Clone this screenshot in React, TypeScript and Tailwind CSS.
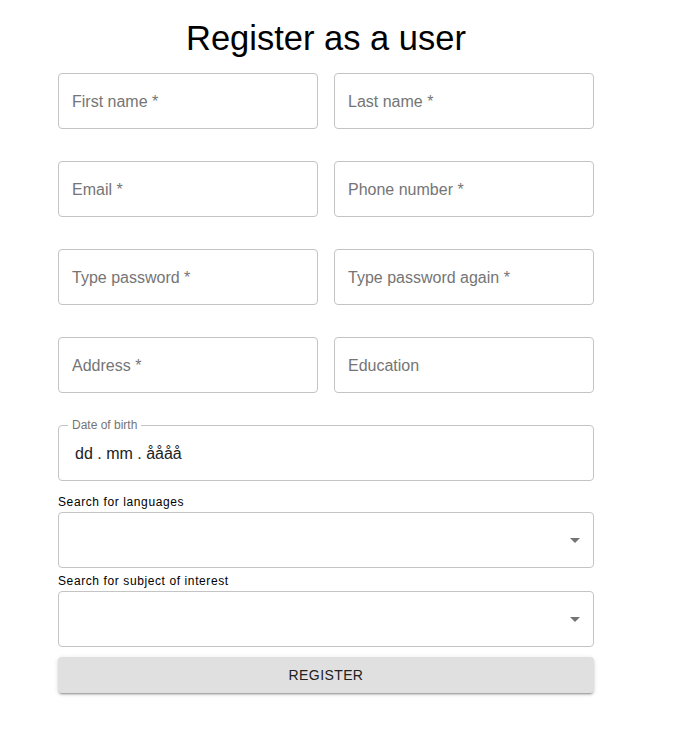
import type { ReactNode } from 'react'

const sans = { fontFamily: '"Liberation Sans", Arial, sans-serif' }

function Field({ label }: { label: string }) {
  return (
    <div className="flex h-[56px] items-center rounded-[4px] border border-[#c4c4c4] px-[13px] pt-[1px] text-[16px] text-[#757575]">
      {label}
    </div>
  )
}

function SelectBox() {
  return (
    <div className="flex h-[56px] items-center justify-end rounded-[4px] border border-[#c4c4c4] pr-[6px]">
      <svg width="24" height="24" viewBox="0 0 24 24" className="fill-[#757575]">
        <path d="M7 10l5 5 5-5z" />
      </svg>
    </div>
  )
}

function SmallLabel({ children, className }: { children: ReactNode; className: string }) {
  return (
    <div className={`flex items-end pb-[3px] text-[12px] leading-[14px] tracking-[0.6px] text-black ${className}`}>
      {children}
    </div>
  )
}

export default function App() {
  return (
    <div className="min-h-[733px] bg-white" style={sans}>
      <div className="ml-[58px] w-[536px] pt-[18px]">
        <h1 className="mb-[15px] text-center text-[34.5px] leading-[40px] text-black">Register as a user</h1>
        <div className="grid grid-cols-2 gap-x-[16px] gap-y-[32px]">
          <Field label="First name *" />
          <Field label="Last name *" />
          <Field label="Email *" />
          <Field label="Phone number *" />
          <Field label="Type password *" />
          <Field label="Type password again *" />
          <Field label="Address *" />
          <Field label="Education" />
          <div className="relative col-span-2 flex h-[56px] items-center rounded-[4px] border border-[#c4c4c4] px-[16px] pt-[1px] text-[16px] text-[#212121]">
            <span className="absolute -top-[8px] left-[9px] bg-white px-[4px] text-[12px] leading-[14px] text-[#757575]">
              Date of birth
            </span>
            dd . mm . åååå
          </div>
        </div>
        <SmallLabel className="h-[31px]">Search for languages</SmallLabel>
        <SelectBox />
        <SmallLabel className="h-[23px]">Search for subject of interest</SmallLabel>
        <SelectBox />
        <button className="mt-[10px] flex h-[36px] w-full items-center justify-center rounded-[4px] bg-[#e0e0e0] text-[14px] uppercase tracking-[0.4px] text-[#212121] shadow-[0_3px_1px_-2px_rgba(0,0,0,0.2),0_2px_2px_0_rgba(0,0,0,0.14),0_1px_5px_0_rgba(0,0,0,0.12)]">
          Register
        </button>
      </div>
    </div>
  )
}
